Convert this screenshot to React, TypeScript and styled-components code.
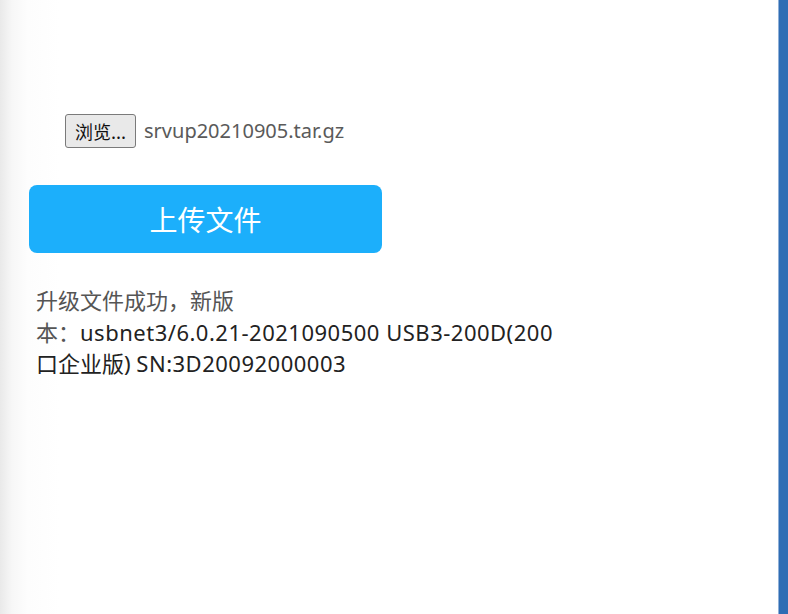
import styled, { createGlobalStyle } from 'styled-components';

const GlobalStyle = createGlobalStyle`
  html, body {
    margin: 0;
    padding: 0;
    background: #ffffff;
  }
`;

const Page = styled.div`
  display: flex;
  width: 788px;
  height: 614px;
  overflow: hidden;
  font-family: "Noto Sans", "Noto Sans CJK SC", sans-serif;
`;

const Main = styled.div`
  flex: 1;
  background: linear-gradient(to right, #e9e9e9 0px, #f7f7f7 12px, #fdfdfd 28px, #ffffff 60px);
  padding: 113px 0 0 29px;
`;

const SideBar = styled.div`
  width: 9px;
  background: #2f6db4;
  border-left: 1px solid #8fb0d8;
`;

const FileRow = styled.div`
  display: flex;
  align-items: center;
  gap: 8px;
  margin-left: 36px;
  height: 35px;
`;

const Browse = styled.button`
  height: 34px;
  padding: 0 9px;
  border: 1px solid #7a7a7a;
  border-radius: 3px;
  background: #e9e9e9;
  color: #111;
  font-family: "Noto Sans CJK SC", sans-serif;
  font-size: 18px;
  line-height: 1;
`;

const FileName = styled.span`
  color: #5a5a5a;
  font-size: 20px;
`;

const Upload = styled.button`
  display: block;
  width: 353px;
  height: 68px;
  margin-top: 37px;
  border: none;
  border-radius: 8px;
  background: #1caffb;
  color: #ffffff;
  font-family: "Noto Sans CJK SC", sans-serif;
  font-size: 28px;
`;

const Result = styled.div`
  margin: 32px 0 0 7px;
  font-size: 22px;
  line-height: 31.5px;
  color: #222;
`;

const Muted = styled.span`
  color: #555;
`;

const Version = styled.span`
  letter-spacing: 0.5px;
`;

export default function App() {
  return (
    <Page>
      <GlobalStyle />
      <Main>
        <FileRow>
          <Browse>浏览...</Browse>
          <FileName>srvup20210905.tar.gz</FileName>
        </FileRow>
        <Upload>上传文件</Upload>
        <Result>
          <Muted>升级文件成功，新版<br />本：</Muted>
          <Version>usbnet3/6.0.21-2021090500 USB3-200D(200</Version>
          <br />
          口企业版) <Version>SN:3D20092000003</Version>
        </Result>
      </Main>
      <SideBar />
    </Page>
  );
}
